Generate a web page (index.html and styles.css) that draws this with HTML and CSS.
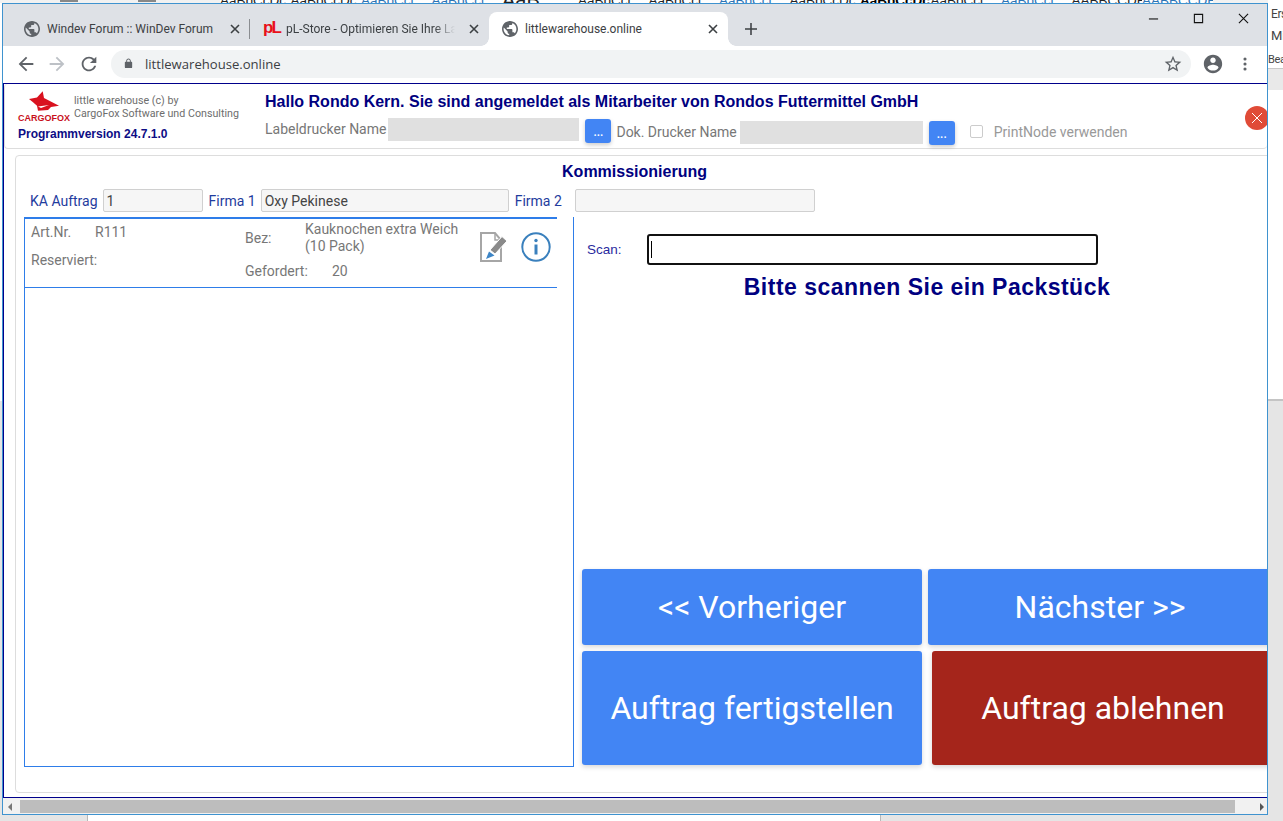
FILE: index.html
```html
<!DOCTYPE html>
<html lang="de">
<head>
<meta charset="utf-8">
<title>littlewarehouse.online</title>
<link rel="stylesheet" href="styles.css">
</head>
<body>
<div class="desktop">
  <div class="ribbon">
    <span class="rb-icons"><i></i><i></i></span>
    <span class="rb">AaBbCcDc</span><span class="rb">AaBbCcDc</span><span class="rb rb-blue">AaBbCcl</span><span class="rb rb-blue">AaBbCcl</span><span class="rb rb-big">AaB</span><span class="rb">AaBbCcl</span><span class="rb">AaBbCcl</span><span class="rb rb-blue">AaBbCcl</span><span class="rb">AaBbCcDc</span><span class="rb rb-bold">AaBbCcDc</span><span class="rb">AaBbCcl</span><span class="rb rb-blue">AaBbCcl</span><span class="rb">AABBCCDE</span><span class="rb rb-blue">AABBCCDE</span>
  </div>
  <div class="side-panel">
    <div class="side-text">Ers</div>
    <div class="side-text side-text-big">Mi</div>
    <div class="side-text side-text-last">Bea</div>
    <div class="side-band"></div>
    <div class="side-gap"></div>
  </div>
  <div class="bottom-strip"><div class="bs-a"></div><div class="bs-b"></div><div class="bs-c"></div></div>

  <div class="window">
    <div class="tabstrip">
      <div class="tab tab-sep">
        <svg class="favicon" viewBox="2 2 20 20"><path d="M12 2C6.48 2 2 6.48 2 12s4.48 10 10 10 10-4.48 10-10S17.52 2 12 2zm-1 17.93c-3.95-.49-7-3.85-7-7.93 0-.62.08-1.21.21-1.79L9 15v1c0 1.1.9 2 2 2v1.93zm6.9-2.54c-.26-.81-1-1.39-1.9-1.39h-1v-3c0-.55-.45-1-1-1H8v-2h2c.55 0 1-.45 1-1V7h2c1.1 0 2-.9 2-2v-.41c2.93 1.19 5 4.06 5 7.41 0 2.08-.8 3.97-2.1 5.39z"/></svg>
        <span class="tab-title">Windev Forum :: WinDev Forum</span>
        <svg class="tab-close" viewBox="0 0 10 10"><path d="M1 1l8 8M9 1l-8 8"/></svg>
      </div>
      <div class="tab">
        <span class="pl-logo">pL</span>
        <span class="tab-title tab-title-fade">pL-Store - Optimieren Sie Ihre Lagerverwaltung</span>
        <svg class="tab-close" viewBox="0 0 10 10"><path d="M1 1l8 8M9 1l-8 8"/></svg>
      </div>
      <div class="tab tab-active">
        <svg class="favicon" viewBox="2 2 20 20"><path d="M12 2C6.48 2 2 6.48 2 12s4.48 10 10 10 10-4.48 10-10S17.52 2 12 2zm-1 17.93c-3.95-.49-7-3.85-7-7.93 0-.62.08-1.21.21-1.79L9 15v1c0 1.1.9 2 2 2v1.93zm6.9-2.54c-.26-.81-1-1.39-1.9-1.39h-1v-3c0-.55-.45-1-1-1H8v-2h2c.55 0 1-.45 1-1V7h2c1.1 0 2-.9 2-2v-.41c2.93 1.19 5 4.06 5 7.41 0 2.08-.8 3.97-2.1 5.39z"/></svg>
        <span class="tab-title">littlewarehouse.online</span>
        <svg class="tab-close" viewBox="0 0 10 10"><path d="M1 1l8 8M9 1l-8 8"/></svg>
      </div>
      <svg class="new-tab" viewBox="0 0 14 14"><path d="M7 0v14M0 7h14"/></svg>
      <div class="win-controls">
        <div class="win-btn"><svg viewBox="0 0 12 12"><path d="M1 6.5h10"/></svg></div>
        <div class="win-btn"><svg viewBox="0 0 12 12"><path d="M1.5 1.5h9v9h-9z"/></svg></div>
        <div class="win-btn"><svg viewBox="0 0 12 12"><path d="M1 1l10 10M11 1L1 11"/></svg></div>
      </div>
    </div>

    <div class="toolbar">
      <div class="tool"><svg class="ico ico-dark" viewBox="0 0 24 24"><path d="M20 11H7.83l5.59-5.59L12 4l-8 8 8 8 1.41-1.41L7.83 13H20v-2z"/></svg></div>
      <div class="tool tool-fwd"><svg class="ico ico-light" viewBox="0 0 24 24"><path d="M12 4l-1.41 1.41L16.17 11H4v2h12.17l-5.58 5.59L12 20l8-8z"/></svg></div>
      <div class="tool"><svg class="ico ico-dark" viewBox="0 0 24 24"><path d="M17.65 6.35C16.2 4.9 14.21 4 12 4c-4.42 0-7.99 3.58-7.99 8s3.57 8 7.99 8c3.73 0 6.84-2.55 7.73-6h-2.08c-.82 2.33-3.04 4-5.65 4-3.31 0-6-2.69-6-6s2.69-6 6-6c1.66 0 3.14.69 4.22 1.78L13 11h7V4l-2.35 2.35z"/></svg></div>
      <div class="omnibox">
        <svg class="lock" viewBox="0 0 24 24"><path d="M18 8h-1V6c0-2.76-2.24-5-5-5S7 3.24 7 6v2H6c-1.1 0-2 .9-2 2v10c0 1.1.9 2 2 2h12c1.1 0 2-.9 2-2V10c0-1.1-.9-2-2-2zM9 6c0-1.66 1.34-3 3-3s3 1.34 3 3v2H9V6z"/></svg>
        <span class="url">littlewarehouse.online</span>
        <svg class="star" viewBox="0 0 24 24"><path d="M22 9.24l-7.19-.62L12 2 9.19 8.63 2 9.24l5.46 4.73L5.82 21 12 17.27 18.18 21l-1.63-7.03L22 9.24zM12 15.4l-3.76 2.27 1-4.28-3.32-2.88 4.38-.38L12 6.1l1.71 4.04 4.38.38-3.32 2.88 1 4.28L12 15.4z"/></svg>
      </div>
      <div class="tool tool-account"><svg class="ico ico-dark" viewBox="0 0 24 24"><path d="M12 2C6.48 2 2 6.48 2 12s4.48 10 10 10 10-4.48 10-10S17.52 2 12 2zm0 3c1.66 0 3 1.34 3 3s-1.34 3-3 3-3-1.34-3-3 1.34-3 3-3zm0 14.2c-2.5 0-4.71-1.28-6-3.22.03-1.99 4-3.08 6-3.08 1.99 0 5.97 1.09 6 3.08-1.29 1.94-3.5 3.22-6 3.22z"/></svg></div>
      <div class="tool"><svg class="ico ico-dark" viewBox="0 0 24 24"><circle cx="12" cy="6.5" r="1.7"/><circle cx="12" cy="12" r="1.7"/><circle cx="12" cy="17.5" r="1.7"/></svg></div>
    </div>

    <div class="frame">
      <header class="app-header">
        <div class="brand">
          <div class="brand-top">
            <div class="logo">
              <svg class="wolf" viewBox="0 0 32 22"><path d="M0 8l8-1.500L13.700.3 15 7l15 7.700-8 1.300-3 3-10 .7-1-5-4-3.400z"/><path class="wolf-eye" d="M9 15.500l11-1.500-8 3z"/></svg>
              <span class="logo-text">CARGOFOX</span>
            </div>
            <div class="brand-copy">
              <div>little warehouse (c) by</div>
              <div>CargoFox Software und Consulting</div>
            </div>
          </div>
          <div class="version">Programmversion 24.7.1.0</div>
        </div>
        <div class="head-main">
          <div class="greeting">Hallo Rondo Kern. Sie sind angemeldet als Mitarbeiter von Rondos Futtermittel GmbH</div>
          <div class="printer-row">
            <span class="p-label">Labeldrucker Name</span>
            <span class="p-input p-input-a"></span>
            <span class="p-btn">...</span>
            <span class="p-group">
              <span class="p-label">Dok. Drucker Name</span>
              <span class="p-input p-input-b"></span>
              <span class="p-btn">...</span>
              <span class="p-check"></span>
              <span class="p-check-label">PrintNode verwenden</span>
            </span>
          </div>
        </div>
        <div class="close-round"><svg viewBox="0 0 12 12"><path d="M1 1l10 10M11 1L1 11"/></svg></div>
      </header>

      <section class="panel">
        <h1 class="panel-title">Kommissionierung</h1>
        <div class="field-row">
          <span class="f-label">KA Auftrag</span>
          <span class="f-input f-w-a">1</span>
          <span class="f-label">Firma 1</span>
          <span class="f-input f-w-b">Oxy Pekinese</span>
          <span class="f-label f-label-wide">Firma 2</span>
          <span class="f-input f-w-c"></span>
        </div>
        <div class="work">
          <div class="list">
            <div class="item">
              <div class="item-left">
                <div class="pair pair-art"><span class="k-art">Art.Nr.</span><span>R111</span></div>
                <div class="pair pair-res"><span>Reserviert:</span></div>
              </div>
              <div class="item-mid">
                <div class="pair-bez"><span class="k-bez">Bez:</span><span>Kauknochen extra Weich<br>(10 Pack)</span></div>
                <div class="pair-gef"><span class="k-gef">Gefordert:</span><span>20</span></div>
              </div>
              <svg class="edit-ico" viewBox="0 0 28 30">
                <path class="doc" d="M1 1h14l6 7v21H1z"/>
                <path class="doc-fold" d="M15 1v7h6"/>
                <path class="pencil" d="M10 18L22 4.500l5 4.500-12 13z"/>
                <path class="pencil-tip" d="M9 19.500l5.500 4L6 27z"/>
              </svg>
              <svg class="info-ico" viewBox="0 0 30 30">
                <circle cx="15" cy="15" r="13.700"/>
                <path class="info-i" d="M15 12.500v10"/>
                <circle class="info-dot" cx="15" cy="8.500" r="1.700"/>
              </svg>
            </div>
          </div>
          <div class="side">
            <div class="scan-row">
              <span class="scan-label">Scan:</span>
              <div class="scan-input"><span class="caret"></span></div>
            </div>
            <div class="scan-msg">Bitte scannen Sie ein Packstück</div>
            <div class="actions">
              <div class="act-row act-row-a">
                <div class="act act-w">&lt;&lt; Vorheriger</div>
                <div class="act act-next">Nächster &gt;&gt;</div>
              </div>
              <div class="act-row act-row-b">
                <div class="act act-w">Auftrag fertigstellen</div>
                <div class="act act-red">Auftrag ablehnen</div>
              </div>
            </div>
          </div>
        </div>
      </section>
    </div>

    <div class="hscroll">
      <span class="arrow arrow-l"></span>
      <div class="thumb"></div>
      <span class="arrow arrow-r"></span>
    </div>
  </div>
</div>
</body>
</html>
```
FILE: styles.css
```css
* { box-sizing: border-box; }
html, body { margin: 0; height: 100%; overflow: hidden; background: #fff; }
.desktop { position: relative; width: 1283px; height: 821px; overflow: hidden; background: #fff; font-family: Roboto, sans-serif; }

/* Things behind the browser window */
.ribbon { position: absolute; left: 0; top: 0; width: 1283px; height: 3px; overflow: hidden; display: flex; background: #f2f2f2; }
.rb-icons { width: 220px; flex: none; display: flex; gap: 60px; padding: 0 0 0 60px; overflow: hidden; }
.rb-icons i { width: 18px; height: 2px; background: #888; flex: none; }
.rb { flex: none; display: block; width: 70.500px; height: 3px; overflow: hidden; font: 13.500px/1px "Liberation Sans", sans-serif; color: #222; white-space: nowrap; background: #fff; }
.rb-blue { color: #2e74b5; }
.rb-bold { font-weight: bold; color: #000; }
.rb-big { font-size: 20px; width: 76px; }
.side-panel { position: absolute; left: 1268px; top: 0; width: 15px; height: 401px; overflow: hidden; background: #fff; font: 12px/14px Roboto, sans-serif; color: #444; }
.side-text { padding-left: 3px; height: 14px; margin-top: 7px; white-space: nowrap; letter-spacing: -.4px; }
.side-text-big { font-size: 13px; margin-top: 8px; height: 16px; letter-spacing: 0; }
.side-text-last { padding-left: 0; margin-top: 8px; font-size: 11px; letter-spacing: -.3px; }
.side-band { height: 22px; margin-top: 1px; background: #e9e9e9; border-top: 1px solid #c8c8c8; }
.side-gap { height: 311px; background: #fff; border-bottom: 2px solid #c4c4c4; }
.bottom-strip { position: absolute; left: 0; right: 0; top: 401px; bottom: 0; display: flex; align-items: stretch; }
.bs-a { width: 88px; background: #e5e5e5; border-right: 1px solid #b8b8b8; }
.bs-b { width: 792px; background: #fff; }
.bs-c { flex: 1; background: #e5e5e5; border-left: 1px solid #b8b8b8; }

/* Browser window */
.window { position: absolute; left: 2px; top: 3px; width: 1266px; height: 812px; border: 1px solid #3f93cf; display: flex; flex-direction: column; overflow: hidden; background: #fff; }
.tabstrip { height: 42px; flex: none; background: #dee1e6; display: flex; align-items: flex-end; padding-left: 8px; position: relative; font: 12px Roboto, sans-serif; color: #3c4043; }
.tab { width: 239px; height: 34px; flex: none; display: flex; align-items: center; padding: 0 10px 0 13px; position: relative; }
.tab-sep::after { content: ""; position: absolute; right: 0; top: 7px; height: 20px; width: 1px; background: #8a8d91; }
.tab-active { background: #fff; border-radius: 8px 8px 0 0; }
.tab-active::before, .tab-active::after { content: ""; position: absolute; bottom: 0; width: 8px; height: 8px; }
.tab-active::before { left: -8px; background: radial-gradient(circle at 0 0, #dee1e6 7.500px, #fff 8px); }
.tab-active::after { right: -8px; background: radial-gradient(circle at 100% 0, #dee1e6 7.500px, #fff 8px); }
.favicon { width: 16px; height: 16px; flex: none; fill: #5f6368; }
.pl-logo { width: 16px; flex: none; font: bold 17px/16px "Liberation Sans", sans-serif; letter-spacing: -2px; color: #e8111b; margin-top: -2px; }
.tab-title { flex: 1; min-width: 0; margin: 0 14px 0 7px; white-space: nowrap; overflow: hidden; }
.tab-title-fade { -webkit-mask-image: linear-gradient(to right, #000 88%, transparent 100%); mask-image: linear-gradient(to right, #000 88%, transparent 100%); }
.tab-close { width: 10px; height: 10px; flex: none; fill: none; stroke: #3c4043; stroke-width: 1.600; }
.new-tab { width: 12px; height: 12px; margin: 0 0 11px 17px; flex: none; fill: none; stroke: #3c4043; stroke-width: 1.800; }
.win-controls { margin-left: auto; margin-right: 1px; align-self: flex-start; display: flex; }
.win-btn { width: 45px; height: 28px; display: flex; align-items: center; justify-content: center; }
.win-btn svg { width: 11px; height: 11px; fill: none; stroke: #111; stroke-width: 1.200; }

.toolbar { height: 37px; flex: none; background: #fff; display: flex; align-items: center; padding: 0 6px 2px 7px; }
.tool { width: 32px; height: 28px; flex: none; display: flex; align-items: center; justify-content: center; }
.tool-fwd { margin-left: -1px; }
.ico { width: 22px; height: 22px; }
.ico-dark { fill: #5f6368; }
.ico-light { fill: #bdc1c6; }
.tool-account { margin-left: 6px; }
.omnibox { flex: 1; height: 28px; margin-left: 6px; border-radius: 14px; background: #f1f3f4; display: flex; align-items: center; padding: 0 8px 0 12px; }
.lock { width: 11px; height: 13px; fill: #5f6368; flex: none; }
.url { flex: 1; margin-left: 11px; font: 13.100px "Open Sans", sans-serif; color: #3c4043; }
.star { width: 20px; height: 20px; fill: #5f6368; flex: none; }

/* Web application */
.frame { flex: 1; min-height: 0; border-top: 1px solid #00008b; border-bottom: 1px solid #00008b; border-left: 1px solid #00008b; overflow: hidden; position: relative; background: #fff; }
.app-header { height: 65px; border: 1px solid #ddd; border-top: 0; border-right: 0; border-radius: 4px; display: flex; }
.brand { width: 260px; flex: none; padding: 7px 0 0 13px; }
.brand-top { display: flex; }
.logo { width: 56px; flex: none; position: relative; height: 32px; padding-left: 11px; }
.wolf { width: 32px; height: 22px; fill: #d9121f; display: block; }
.wolf-eye { fill: #fff; }
.logo-text { display: block; font: bold 9px/10px "Liberation Sans", sans-serif; color: #c8101c; white-space: nowrap; margin-left: -11px; }
.brand-copy { font: 10.700px/13px Roboto, sans-serif; color: #6d6d6d; padding-top: 3px; white-space: nowrap; }
.version { font: bold 12px/14px "Liberation Sans", Roboto, sans-serif; color: #0d0d85; margin-top: 4px; white-space: nowrap; }
.head-main { flex: 1; padding-top: 9px; }
.greeting { font: bold 16px/18px "Liberation Sans", sans-serif; color: #000080; white-space: nowrap; }
.printer-row { display: flex; align-items: flex-start; margin-top: 7px; font-size: 14px; color: #777; }
.p-label { line-height: 23px; white-space: nowrap; margin-right: 2px; }
.p-input { height: 23px; background: #e0e0e0; flex: none; }
.p-input-a { width: 191px; }
.p-input-b { width: 183px; margin-left: 1px; }
.p-btn { width: 26px; height: 24px; margin: 1px 0 0 6px; flex: none; background: #4285f4; border-radius: 3px; color: #fff; font-size: 12px; font-weight: 500; line-height: 26px; text-align: center; box-shadow: 0 2px 4px rgba(0,0,0,.2); }
.p-group { display: flex; align-items: flex-start; margin: 3px 0 0 5px; }
.p-group .p-btn { margin-top: 0; }
.p-check { width: 13px; height: 13px; margin: 4px 0 0 15px; border: 1px solid #ccc; border-radius: 2px; background: #fff; flex: none; }
.p-check-label { line-height: 23px; margin-left: 11px; color: #999; white-space: nowrap; }
.close-round { position: absolute; left: 1241px; top: 22px; width: 24px; height: 24px; border-radius: 50%; background: #e04b37; display: flex; align-items: center; justify-content: center; }
.close-round svg { width: 12px; height: 12px; fill: none; stroke: #fff; stroke-width: 1; }

.panel { width: 1280px; height: 638px; margin: 6px 0 0 11px; border: 1px solid #ddd; border-radius: 4px; }
.panel-title { margin: 7px 0 0; font: bold 16px/18px "Liberation Sans", sans-serif; color: #000080; text-align: center; width: 1237px; }
.field-row { display: flex; align-items: center; height: 23px; margin-top: 8px; padding-left: 14px; font-size: 14px; color: #1f3c9e; }
.f-label { white-space: nowrap; }
.f-label-wide { width: 60px; flex: none; }
.f-input { height: 23px; margin: 0 6px 0 5px; padding: 2px 3px; border: 1px solid #d0d0d0; border-radius: 2px; background: #f6f6f6; color: #444; line-height: 18px; flex: none; }
.f-w-a { width: 100px; margin-left: 5px; }
.f-w-b { width: 248px; }
.f-w-c { width: 240px; margin-left: 0; }

.work { display: flex; margin: 5px 0 0 8px; }
.list { width: 550px; height: 550px; flex: none; border: 1px solid #2e7de9; border-top: 0; }
.item { width: 532px; height: 71px; border-top: 2px solid #2e7de9; border-bottom: 1px solid #2e7de9; display: flex; position: relative; font-size: 14px; line-height: 17px; color: #777; }
.item-left { width: 220px; flex: none; padding: 5px 0 0 6px; }
.pair { display: flex; }
.k-art { width: 64px; }
.pair-res { margin-top: 11px; }
.item-mid { width: 235px; flex: none; }
.pair-bez { display: flex; padding-top: 2px; align-items: center; }
.k-bez { width: 60px; flex: none; }
.pair-gef { display: flex; margin-top: 8px; }
.k-gef { width: 87px; flex: none; }
.edit-ico { width: 28px; height: 30px; margin-top: 13px; flex: none; }
.doc { fill: #fff; stroke: #a6a6a6; stroke-width: 2; }
.doc-fold { fill: none; stroke: #a6a6a6; stroke-width: 1.500; }
.pencil { fill: #8a8a8a; stroke: #fff; stroke-width: 1; }
.pencil-tip { fill: #3d85c6; }
.info-ico { width: 30px; height: 30px; margin: 13px 0 0 13px; flex: none; }
.info-ico circle { fill: none; stroke: #3a80bd; stroke-width: 2; }
.info-ico .info-dot { fill: #3a80bd; stroke: none; }
.info-i { fill: none; stroke: #3a80bd; stroke-width: 3; }

.side { width: 690px; height: 548px; margin-left: 8px; flex: none; display: flex; flex-direction: column; }
.scan-row { display: flex; align-items: center; margin-top: 17px; padding-left: 5px; }
.scan-label { width: 60px; flex: none; font: 13.500px "Liberation Sans", sans-serif; color: #2a2a9e; }
.scan-input { width: 451px; height: 31px; flex: none; border: 2px solid #111; border-radius: 3px; background: #fff; display: flex; align-items: center; padding-left: 2px; }
.caret { width: 1px; height: 17px; background: #000; }
.scan-msg { margin-top: 9px; text-align: center; font: bold 23px/26px "Liberation Sans", sans-serif; letter-spacing: .48px; color: #000080; white-space: nowrap; }
.actions { margin-top: auto; display: flex; flex-direction: column; gap: 6px; }
.act-row { display: flex; gap: 6px; }
.act-row-a { height: 76px; }
.act-row-b { height: 114px; gap: 10px; }
.act { display: flex; align-items: center; justify-content: center; background: #4285f4; color: #fff; border-radius: 3px; font-size: 32px; box-shadow: 0 2px 5px rgba(0,0,0,.16); white-space: nowrap; }
.act-w { width: 340px; flex: none; }
.act-next { width: 344px; flex: none; }
.act-red { width: 342px; flex: none; background: #a5251b; }

.hscroll { height: 16px; flex: none; background: #f1f1f1; display: flex; align-items: center; position: relative; }
.thumb { position: absolute; left: 17px; top: 2px; width: 1215px; height: 13px; background: #bdbdbd; }
.arrow { position: absolute; top: 5px; width: 0; height: 0; border-top: 4px solid transparent; border-bottom: 4px solid transparent; }
.arrow-l { left: 5px; border-right: 4px solid #777; }
.arrow-r { right: 3px; border-left: 4px solid #555; }
```
